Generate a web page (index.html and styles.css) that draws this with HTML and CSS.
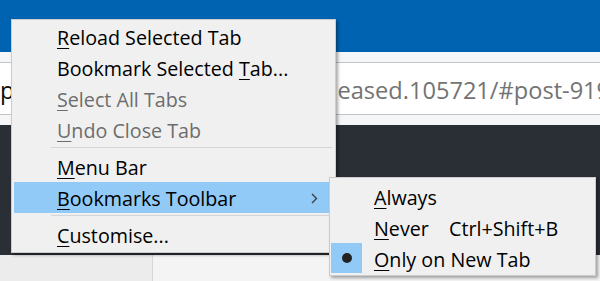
FILE: index.html
```html
<!DOCTYPE html>
<html lang="en">
<head>
    <meta charset="UTF-8">
    <title>Tab context menu</title>
    <link rel="stylesheet" href="styles.css">
</head>
<body>

    <div class="window">
        <div class="titlebar"></div>
        <div class="navbar">
            <div class="urlbar">
                <span class="url-host">p</span>
                <span class="url-path">eased.105721/#post-919</span>
            </div>
        </div>
        <div class="content"></div>
        <div class="statusbar">
            <div class="status-left"></div>
            <div class="status-right"></div>
        </div>
    </div>

    <div class="menu tab-menu">
        <div class="item"><span class="label"><u>R</u>eload Selected Tab</span></div>
        <div class="item"><span class="label">Bookmark Selected <u>T</u>ab...</span></div>
        <div class="item disabled"><span class="label"><u>S</u>elect All Tabs</span></div>
        <div class="item disabled"><span class="label"><u>U</u>ndo Close Tab</span></div>
        <div class="separator"></div>
        <div class="item"><span class="label"><u>M</u>enu Bar</span></div>
        <div class="item active">
            <span class="label"><u>B</u>ookmarks Toolbar</span>
            <svg class="arrow" width="7" height="11" viewBox="0 0 7 11">
                <path d="M1 1 L5.5 5.5 L1 10" fill="none" stroke="#3a3a3a" stroke-width="1.3"/>
            </svg>
        </div>
        <div class="separator"></div>
        <div class="item"><span class="label"><u>C</u>ustomise...</span></div>
    </div>

    <div class="menu sub-menu">
        <div class="item"><span class="label"><u>A</u>lways</span></div>
        <div class="item">
            <span class="label short"><u>N</u>ever</span>
            <span class="shortcut">Ctrl+Shift+B</span>
        </div>
        <div class="item checked">
            <span class="check"><span class="bullet"></span></span>
            <span class="label"><u>O</u>nly on New Tab</span>
        </div>
    </div>

</body>
</html>
```

FILE: styles.css
```css
* {
    margin: 0;
    padding: 0;
    box-sizing: border-box;
}

body {
    width: 600px;
    height: 281px;
    overflow: hidden;
    font-family: "Open Sans", "Noto Sans", sans-serif;
    font-size: 19.7px;
    color: #000;
    background-color: #f2f2f2;
}

/* background browser window */

.window {
    display: flex;
    flex-direction: column;
    height: 281px;
}

.titlebar {
    height: 52px;
    background-color: #0063b1;
}

.navbar {
    height: 73px;
    padding-top: 10px;
    background-color: #f5f6f7;
}

.urlbar {
    display: flex;
    align-items: center;
    height: 53px;
    padding-top: 2px;
    font-size: 23.6px;
    background-color: #fff;
    border-top: 1px solid #c4c4c4;
    border-bottom: 1px solid #c4c4c4;
    white-space: nowrap;
    overflow: hidden;
}

.url-host {
    color: #0c0c0d;
}

.url-path {
    color: #737373;
    margin-left: 323px;
}

.content {
    height: 130px;
    background-color: #2a2e35;
}

.statusbar {
    flex: 1;
    display: flex;
}

.status-left {
    width: 153px;
    background-color: #ececec;
    border-right: 1px solid #d6d6d6;
}

.status-right {
    flex: 1;
    background-color: #f4f4f4;
}

/* context menus */

.menu {
    position: absolute;
    background-color: #f0f0f0;
    border: 1px solid #cccccc;
    box-shadow: 2px 2px 3px rgba(0, 0, 0, 0.35);
}

.tab-menu {
    left: 11px;
    top: 19px;
    width: 325px;
    padding: 1px 2px 2px 2px;
}

.sub-menu {
    left: 329px;
    top: 177px;
    width: 267px;
    padding: 3px 1px 1px 1px;
}

.item {
    position: relative;
    display: flex;
    align-items: center;
    height: 31px;
    padding-left: 43px;
    padding-top: 3px;
    line-height: 28px;
    white-space: nowrap;
}

.item u {
    text-decoration: underline;
    text-decoration-thickness: 1px;
    text-underline-offset: 3px;
}

.item.disabled {
    color: #6d6d6d;
}

.item.active {
    background-color: #91c9f7;
}

.arrow {
    margin-left: auto;
    margin-right: 15px;
    margin-top: -2px;
}

.separator {
    height: 6px;
    margin-left: 37px;
    margin-right: 1px;
    padding-top: 2px;
}

.separator::after {
    content: "";
    display: block;
    height: 1px;
    background-color: #d5d5d5;
}

.label.short {
    width: 75px;
}

.check {
    position: absolute;
    left: 0;
    top: 0;
    width: 31px;
    height: 30px;
    display: flex;
    align-items: center;
    justify-content: center;
    background-color: #91c9f7;
}

.bullet {
    width: 10px;
    height: 10px;
    border-radius: 50%;
    background-color: #222;
}
```
